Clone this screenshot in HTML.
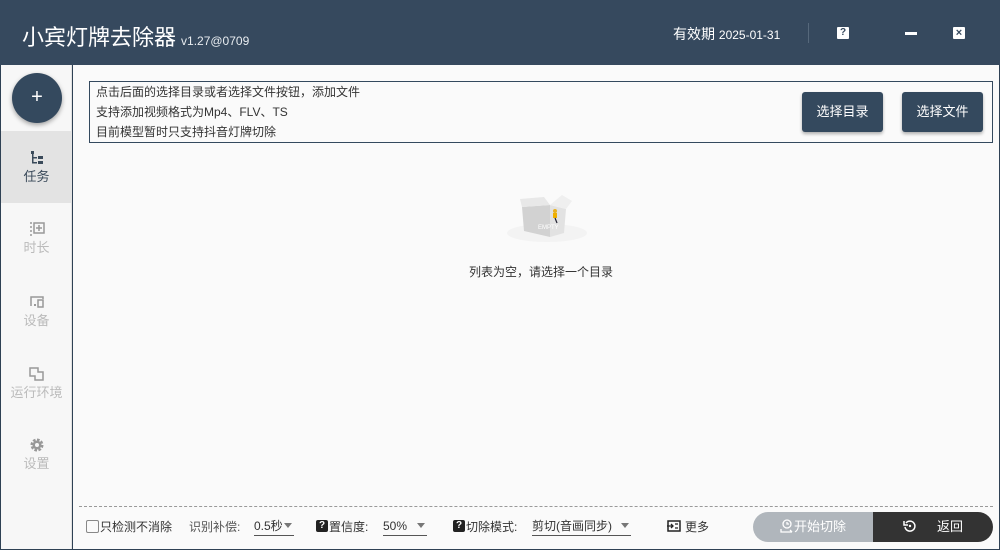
<!DOCTYPE html>
<html><head><meta charset="utf-8"><style>
*{margin:0;padding:0;box-sizing:border-box}
body{width:1000px;height:550px;overflow:hidden;background:#2f4154;font-family:"Liberation Sans","Noto Sans CJK SC",sans-serif;position:relative}
.title{position:absolute;left:0;top:0;width:1000px;height:65px;background:#36495e}
.title .name{position:absolute;left:22px;top:20px;color:#fff;font-size:22px}
.title .ver{font-size:12px;color:#e8ecf0;margin-left:5px}
.exp{position:absolute;left:673px;top:24px;color:#fff;font-size:14px}
.exp span{font-size:12px}
.sep{position:absolute;left:808px;top:23px;width:1px;height:20px;background:#56687b}
.side{position:absolute;left:1px;top:65px;width:71px;height:484px;background:#f7f7f7;border-right:1px solid #e2e2e2}
.main{position:absolute;left:73px;top:65px;width:926px;height:484px;background:#fafafa}
.plus{position:absolute;left:12px;top:73px;width:50px;height:50px;border-radius:50%;background:#34495e;box-shadow:0 2px 5px rgba(0,0,0,.35);color:#fff;font-size:20px;text-align:center;line-height:48px}
.nav{position:absolute;left:1px;width:71px;text-align:center;font-size:13px;color:#bbb}
.nav.act{background:#e3e3e3;color:#3a4a5a}
.box{position:absolute;left:89px;top:81px;width:904px;height:62px;border:1px solid #34495e;background:#fafafa}
.box p{position:absolute;left:6px;font-size:12px;color:#333}
.btn{position:absolute;top:92px;width:81px;height:40px;background:#34495e;color:#fff;font-size:13px;text-align:center;line-height:40px;border-radius:3px;box-shadow:0 2px 3px rgba(0,0,0,.3)}
.empty{position:absolute;top:263px;text-align:center;font-size:12px;color:#333}
.dash{position:absolute;left:79px;top:506px;width:914px;border-top:1px dashed #999}
.bot{position:absolute;top:519px;font-size:12px;color:#333;line-height:16px;white-space:nowrap}
.q{display:inline-block;width:12px;height:12px;background:#222;color:#fff;font-size:10px;text-align:center;line-height:12px;border-radius:2px;font-weight:bold;vertical-align:middle;position:relative;top:-2px;margin-right:1px}
.sel{position:absolute;top:518px;border-bottom:1px solid #555;height:18px;line-height:16px;font-size:12px;color:#333;overflow:hidden;white-space:nowrap}
.sel:after{content:"";position:absolute;right:2px;top:5px;border:4px solid transparent;border-top:5px solid #777}
.start{position:absolute;left:753px;top:512px;width:120px;height:30px;background:#b0b6bc;border-radius:15px 0 0 15px;color:#fff;font-size:13px;line-height:30px;text-align:center}
.back{position:absolute;left:873px;top:512px;width:120px;height:30px;background:#333;border-radius:0 15px 15px 0;color:#fff;font-size:13px;line-height:30px}
</style></head><body>
<div class="title">
<div class="name">小宾灯牌去除器<span class="ver">v1.27@0709</span></div>
<div class="exp">有效期 <span>2025-01-31</span></div>
<div class="sep"></div>
<div style="position:absolute;left:837px;top:27px;width:12px;height:12px;background:#fff;border-radius:1px;color:#36495e;font-size:10px;font-weight:bold;text-align:center;line-height:12px">?</div>
<div style="position:absolute;left:905px;top:32px;width:12px;height:3px;background:#fff"></div>
<div style="position:absolute;left:953px;top:27px;width:12px;height:12px;background:#fff;border-radius:1px;color:#36495e;font-size:11px;font-weight:bold;text-align:center;line-height:12px">×</div>
</div>
<div class="side"></div>
<div class="main"></div>
<div class="plus">+</div>
<div class="nav act" style="top:131px;height:72px">
<svg width="16" height="16" viewBox="0 0 16 16" style="margin-top:19px"><rect x="2" y="1" width="3" height="3" fill="#3a4a5a"/><rect x="3" y="4" width="1.5" height="9" fill="#3a4a5a"/><rect x="3" y="7" width="5" height="1.5" fill="#3a4a5a"/><rect x="3" y="12" width="5" height="1.5" fill="#3a4a5a"/><rect x="9" y="6" width="5" height="3" fill="#3a4a5a"/><rect x="9" y="11" width="5" height="3" fill="#3a4a5a"/></svg>
<div style="margin-top:-3px">任务</div></div>
<div class="nav" style="top:221px"><svg width="16" height="16" viewBox="0 0 16 16"><path d="M2 1v14" stroke="#999" stroke-width="1.5" stroke-dasharray="2 2"/><rect x="5" y="2" width="10" height="10" fill="none" stroke="#999" stroke-width="1.5"/><path d="M10 4v6M7 7h6" stroke="#999" stroke-width="1.5"/></svg><div style="margin-top:-3px">时长</div></div>
<div class="nav" style="top:294px"><svg width="16" height="16" viewBox="0 0 16 16"><path d="M2 12V3h12v2" fill="none" stroke="#999" stroke-width="1.5"/><rect x="9" y="6" width="5" height="7" fill="none" stroke="#999" stroke-width="1.5"/><rect x="5" y="10" width="2" height="2" fill="#999"/></svg><div style="margin-top:-3px">设备</div></div>
<div class="nav" style="top:366px"><svg width="16" height="16" viewBox="0 0 16 16"><path d="M1 2h8v4h5v8H6v-4H1z" fill="none" stroke="#999" stroke-width="1.5"/></svg><div style="margin-top:-3px">运行环境</div></div>
<div class="nav" style="top:437px"><svg width="16" height="16" viewBox="0 0 16 16"><circle cx="8" cy="8" r="5" fill="none" stroke="#999" stroke-width="3" stroke-dasharray="2.5 1.4"/><circle cx="8" cy="8" r="4.5" fill="#999"/><circle cx="8" cy="8" r="2" fill="#f7f7f7"/></svg><div style="margin-top:-3px">设置</div></div>
<div class="box">
<p style="top:1px">点击后面的选择目录或者选择文件按钮，添加文件</p>
<p style="top:21px">支持添加视频格式为Mp4、FLV、TS</p>
<p style="top:41px">目前模型暂时只支持抖音灯牌切除</p>
</div>
<div class="btn" style="left:802px">选择目录</div>
<div class="btn" style="left:902px">选择文件</div>
<svg style="position:absolute;left:500px;top:185px" width="95" height="60" viewBox="0 0 95 60">
<ellipse cx="47" cy="48" rx="40" ry="9" fill="#f3f3f3"/>
<polygon points="22,22 50,20 50,52 24,46" fill="#d2d2d2"/>
<polygon points="50,20 66,24 64,48 50,52" fill="#e2e2e2"/>
<polygon points="20,14 44,12 50,20 22,22" fill="#e8e8e8"/>
<polygon points="50,20 62,10 72,16 66,24" fill="#efefef"/>
<text x="38" y="44" font-size="6" fill="#fff" font-family="Liberation Sans">EMPTY</text>
<circle cx="55" cy="26" r="2" fill="#e8b020"/><rect x="53" y="28" width="4" height="5" fill="#f0b000"/><path d="M55 33l2 5" stroke="#223" stroke-width="1.2"/>
</svg>
<div class="empty" style="left:0;width:1082px">列表为空，请选择一个目录</div>
<div class="dash"></div>
<div class="bot" style="left:86px"><span style="display:inline-block;width:13px;height:13px;border:1.5px solid #888;border-radius:2px;vertical-align:-2px;margin-right:1px"></span>只检测不消除</div>
<div class="bot" style="left:189px;color:#555">识别补偿:</div>
<div class="sel" style="left:254px;width:40px">0.5秒</div>
<div class="bot" style="left:316px"><span class="q">?</span>置信度:</div>
<div class="sel" style="left:383px;width:44px">50%</div>
<div class="bot" style="left:453px"><span class="q">?</span>切除模式:</div>
<div class="sel" style="left:532px;width:99px">剪切(音画同步)</div>
<div class="bot" style="left:667px"><svg width="14" height="12" viewBox="0 0 14 12" style="vertical-align:-1px;margin-right:4px"><rect x="1" y="1" width="12" height="10" fill="none" stroke="#222" stroke-width="1.5"/><path d="M0 6h6M4 4l2 2-2 2M8 4h3M8 8h3" stroke="#222" stroke-width="1.3" fill="none"/></svg>更多</div>
<div class="start"><svg width="14" height="14" viewBox="0 0 14 14" style="vertical-align:-2px"><circle cx="7" cy="5" r="4" fill="none" stroke="#fff" stroke-width="1.3"/><path d="M7 3v2h2M1 10v3h11M10 11l2 2" stroke="#fff" stroke-width="1.3" fill="none"/></svg>开始切除</div>
<div class="back"><svg width="14" height="14" viewBox="0 0 14 14" style="margin-left:30px;vertical-align:-2px"><path d="M3 4A5 5 0 1 1 2 8" fill="none" stroke="#fff" stroke-width="1.5"/><path d="M1 2v4h4" fill="none" stroke="#fff" stroke-width="1.5"/><circle cx="7" cy="7" r="1.2" fill="#fff"/></svg><span style="margin-left:20px">返回</span></div>
</body></html>
